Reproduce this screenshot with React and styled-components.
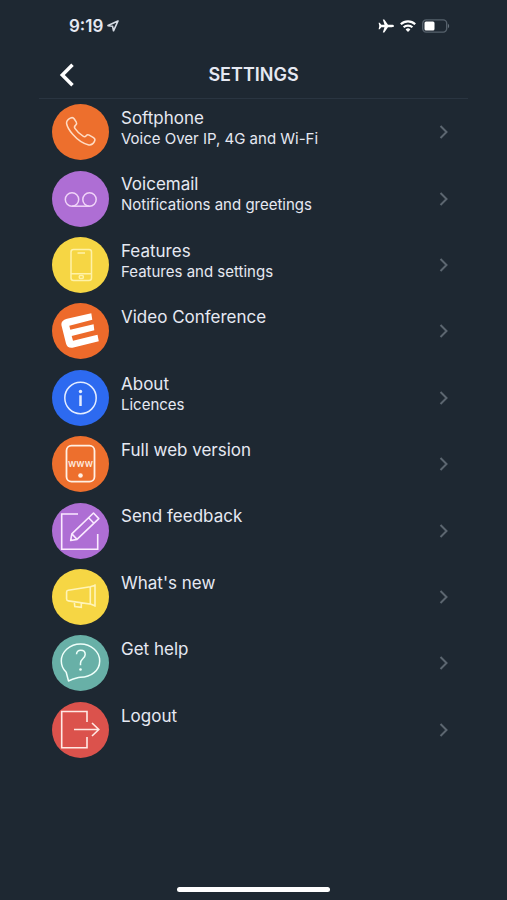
import React from "react";
import styled, { createGlobalStyle } from "styled-components";

const GlobalStyle = createGlobalStyle`
  * { box-sizing: border-box; }
  body { margin: 0; background: #1e2832; }
`;

const Screen = styled.div`
  min-height: 100vh;
  display: flex;
  flex-direction: column;
  background: #1e2832;
  color: #e6e9f2;
  font-family: Inter, "Liberation Sans", sans-serif;
`;

const StatusBar = styled.div`
  display: flex;
  align-items: center;
  justify-content: space-between;
  height: 52px;
  padding: 0 57px 0 69px;
`;

const StatusGroup = styled.div`
  display: flex;
  align-items: center;
  gap: ${(p) => p.$gap}px;
`;

const Clock = styled.time`
  font-size: 17px;
  font-weight: 600;
  line-height: 20px;
`;

const Header = styled.header`
  display: grid;
  grid-template-columns: 32px 1fr 32px;
  align-items: center;
  height: 47px;
  margin: 0 39px;
  padding: 0 12px;
  border-bottom: 1px solid #2a3541;
`;

const BackButton = styled.button`
  display: flex;
  align-items: center;
  justify-content: center;
  height: 40px;
  padding: 0;
  border: 0;
  background: none;
  color: #fff;
  cursor: pointer;
`;

const Title = styled.h1`
  margin: 0;
  text-align: center;
  font-size: 18px;
  font-weight: 600;
  line-height: 24px;
`;

const List = styled.ul`
  display: grid;
  grid-auto-rows: 1fr;
  min-height: 664px;
  margin: 0;
  padding: 0;
  list-style: none;
`;

const RowLink = styled.a`
  display: flex;
  align-items: center;
  gap: 12px;
  height: 100%;
  padding: 0 58px 0 52px;
  color: inherit;
  text-decoration: none;
`;

const Badge = styled.span`
  flex: none;
  width: 57px;
  height: 56px;
  border-radius: 50%;
  background: ${(p) => p.$color};
  color: ${(p) => p.$ink};
`;

const Glyph = styled.svg`
  display: block;
  fill: none;
  stroke: currentColor;
  stroke-width: ${(p) => p.$weight || 1.5};
`;

const WebText = styled.text`
  fill: currentColor;
  stroke: none;
  font-family: Inter, sans-serif;
  font-size: 10px;
  font-weight: 500;
  text-anchor: middle;
`;

const Labels = styled.span`
  flex: 1;
  align-self: flex-start;
  display: flex;
  flex-direction: column;
  padding-top: 8px;
`;

const Label = styled.span`
  font-size: 17px;
  line-height: 22px;
`;

const Detail = styled.span`
  font-size: 15px;
  line-height: 20px;
`;

const HomeArea = styled.div`
  display: flex;
  justify-content: center;
  margin-top: auto;
  padding-bottom: 8px;
`;

const HomeIndicator = styled.div`
  width: 30%;
  height: 5px;
  border-radius: 3px;
  background: #fff;
`;

const icons = {
  phone: (
    <path
      strokeLinejoin="round"
      d="M18.300 14.200C19.900 13.300 21.400 13.500 22.300 15L24.300 18.200C25 19.400 24.700 20.300 23.700 21.100C22.300 22.200 22 23 22.900 24.400C25 27.600 28 30.400 31.400 32.400C32.600 33.100 33.300 32.800 34.200 31.700C35 30.700 36 30.500 37.200 31.200L41.500 33.700C43 34.600 43.200 36 42.500 37.400C41.300 39.800 39.200 41.400 36.800 41C31 39.700 25.500 35.800 20.700 30.300C17.500 26.600 15.200 22.800 14.600 19.500C14.300 17.600 16.200 15.400 18.300 14.200Z"
    />
  ),
  voicemail: (
    <>
      <circle cx="20" cy="28.500" r="6.700" />
      <circle cx="37.500" cy="28.500" r="6.700" />
      <path d="M20 35.200h17.500" />
    </>
  ),
  mobile: (
    <>
      <rect x="19" y="12.500" width="20.500" height="31" rx="2.500" />
      <path d="M19 36.800h20.500M25.500 16h7.500" />
      <rect x="27.300" y="38.600" width="4" height="2.800" rx="1" />
    </>
  ),
  brand: (
    <path
      fill="currentColor"
      stroke="none"
      d="M39.300 10.300L15 15.800C11 16.800 9 19 9.500 22.500L14 40.500C14.800 44 17.500 45.300 21.500 44.500L46.800 38.200L45.500 31.800L21 37.800L19.700 33L42.300 27.300L41.600 21.300L18.300 26.800L17.300 22.700L40.300 16.800Z"
    />
  ),
  info: (
    <>
      <circle cx="28.500" cy="28" r="15.700" />
      <circle cx="28.500" cy="21.500" r="1.700" fill="currentColor" stroke="none" />
      <path strokeWidth="2.500" d="M28.500 25.300v10.700" />
    </>
  ),
  web: (
    <>
      <rect x="14.500" y="9.700" width="28" height="36" rx="5" />
      <WebText x="28.500" y="30.500">www</WebText>
      <circle cx="28.500" cy="39.500" r="2.300" fill="currentColor" stroke="none" />
    </>
  ),
  pencil: (
    <>
      <path d="M26 11H9.700v35.200h36V31" />
      <path
        strokeLinejoin="round"
        d="M18.700 37.500l1.100-6.700L41.500 10l5.300 5.600L25 36.400zM19.800 30.800l5.200 5.600M36.600 14.700l5.300 5.600"
      />
    </>
  ),
  megaphone: (
    <path d="M38.300 17.800l-22 3.500c-1.200.2-1.700.8-1.700 1.800v6.900c0 1 .5 1.700 1.700 1.900l22 3.200zM38.300 17.800l4.700-1.500v20.500l-4.700-1.700M43 15.300v22.500M22.300 33l.5 4.500 6.500.8v-4.200" />
  ),
  help: (
    <>
      <path
        strokeLinejoin="round"
        d="M14.200 37.200C11 34.200 9.300 30.200 9.300 26 9.300 16.600 17.900 9 28.500 9s19.200 7.600 19.200 17-8.600 16.300-19.200 16.300c-3 0-5 .7-12 3.700z"
      />
      <path d="M24.500 19.300c.2-2.600 2-4 4.300-4 2.600 0 4.400 1.700 4.400 4.100 0 2-1 3-2.400 4.300-1.500 1.400-2.300 2.500-2.300 4.500v2" />
      <circle cx="28.500" cy="34.500" r="1.300" fill="currentColor" stroke="none" />
    </>
  ),
  logout: (
    <path d="M35 20V9.500H9.700v36.200H35V35M22 27.500h24.500M40 21l6.800 6.500L40 34" />
  ),
};

const items = [
  { icon: "phone", color: "#ed6f2d", ink: "#ffdcc4", label: "Softphone", detail: "Voice Over IP, 4G and Wi-Fi" },
  { icon: "voicemail", color: "#ae6ed4", ink: "#f0d4f8", label: "Voicemail", detail: "Notifications and greetings" },
  { icon: "mobile", color: "#f6d644", ink: "#fff2a8", label: "Features", detail: "Features and settings" },
  { icon: "brand", color: "#ed6a2b", ink: "#ffffff", label: "Video Conference" },
  { icon: "info", color: "#2d6af0", ink: "#e4edff", label: "About", detail: "Licences" },
  { icon: "web", color: "#ed6f2d", ink: "#fff0e4", label: "Full web version", weight: 1.8 },
  { icon: "pencil", color: "#ae6ed4", ink: "#faeaff", label: "Send feedback", weight: 1.6 },
  { icon: "megaphone", color: "#f6d644", ink: "#fff4b8", label: "What's new", weight: 1.6 },
  { icon: "help", color: "#68b0a7", ink: "#effffa", label: "Get help" },
  { icon: "logout", color: "#db524c", ink: "#ffe9e4", label: "Logout", weight: 1.6 },
];

function SettingsRow({ item }) {
  return (
    <li>
      <RowLink href={`#${item.icon}`}>
        <Badge $color={item.color} $ink={item.ink}>
          <Glyph width="57" height="56" viewBox="0 0 57 56" $weight={item.weight} aria-hidden="true">
            {icons[item.icon]}
          </Glyph>
        </Badge>
        <Labels>
          <Label>{item.label}</Label>
          {item.detail && <Detail>{item.detail}</Detail>}
        </Labels>
        <svg width="10" height="16" viewBox="0 0 10 16" fill="none" stroke="#5c6670" strokeWidth="2" aria-hidden="true">
          <path d="M1.500 2l6 6-6 6" />
        </svg>
      </RowLink>
    </li>
  );
}

export default function App() {
  return (
    <Screen>
      <GlobalStyle />
      <StatusBar>
        <StatusGroup $gap={4}>
          <Clock>9:19</Clock>
          <svg width="12" height="12" viewBox="0 0 12 12" fill="none" stroke="#d5dbe4" strokeWidth="1.600" strokeLinejoin="round" aria-hidden="true">
            <path d="M11 1L1 5.600l4.600.7.9 4.500z" />
          </svg>
        </StatusGroup>
        <StatusGroup $gap={6}>
          <svg width="16" height="14" viewBox="0 0 16 14" fill="#fff" aria-hidden="true">
            <path d="M16 7c0 .8-1 1.200-2.200 1.200H10L6.300 13.600H4.800L6.500 8.200H3.300L1.700 10.300H.6L1.300 7 .6 3.700h1.100l1.600 2.100h3.200L4.800.4h1.500L10 5.800h3.800C15 5.800 16 6.200 16 7z" />
          </svg>
          <svg width="16" height="12" viewBox="0 0 16 12" fill="none" stroke="#fff" strokeWidth="2.200" aria-hidden="true">
            <path d="M.8 4.300a10.400 10.400 0 0 1 14.400 0M3.600 7.300a6.400 6.400 0 0 1 8.800 0" />
            <path d="M8 12L5.600 9.500a3.500 3.500 0 0 1 4.800 0z" fill="#fff" stroke="none" />
          </svg>
          <svg width="28" height="14" viewBox="0 0 28 14" aria-hidden="true">
            <rect x=".7" y=".9" width="24" height="12.200" rx="3.500" fill="none" stroke="#56616c" strokeWidth="1.400" />
            <rect x="2.500" y="2.600" width="10" height="8.800" rx="1.500" fill="#fff" />
            <path d="M26 4.800c1.600.8 1.600 3.600 0 4.400z" fill="#65707b" />
          </svg>
        </StatusGroup>
      </StatusBar>
      <Header>
        <BackButton aria-label="Back">
          <svg width="16" height="24" viewBox="0 0 16 24" fill="none" stroke="currentColor" strokeWidth="3.500" aria-hidden="true">
            <path d="M13.500 1.800L3.300 12l10.200 10.200" />
          </svg>
        </BackButton>
        <Title>SETTINGS</Title>
      </Header>
      <List>
        {items.map((item) => (
          <SettingsRow key={item.icon} item={item} />
        ))}
      </List>
      <HomeArea>
        <HomeIndicator />
      </HomeArea>
    </Screen>
  );
}
